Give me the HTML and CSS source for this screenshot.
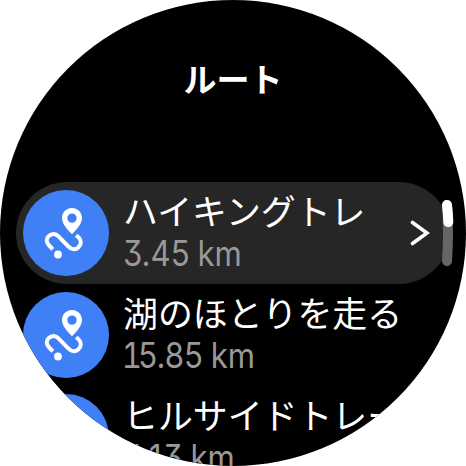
FILE: index.html
```
<!DOCTYPE html>
<html lang="ja">
<head>
<meta charset="utf-8">
<title>ルート</title>
<link rel="stylesheet" href="styles.css">
</head>
<body>
<svg class="defs" width="0" height="0" aria-hidden="true">
  <symbol id="route" viewBox="0 0 86 86">
    <path fill="#fff" fill-rule="evenodd" d="M49 18c-5.500 0-10 4.300-10 9.700 0 5.800 4.800 11.300 10 16.600 5.200-5.300 10-10.800 10-16.600 0-5.400-4.500-9.700-10-9.700zm0 5.400a4.700 4.700 0 1 1 0 9.400a4.700 4.700 0 1 1 0-9.400z"/>
    <path fill="none" stroke="#fff" stroke-width="4" d="M29.800 59.300L26.200 55.500C23 52.200 23 48.500 25.800 46C28.500 43.400 32.500 43.300 35.500 46.300L44.700 55.900C48.200 59.600 52.200 60.200 55.200 57.500C58.500 54.500 58.600 50.500 56 47.900L53.300 45.200"/>
    <circle cx="35" cy="64.500" r="3.900" fill="#fff"/>
  </symbol>
</svg>
<main class="watch">
  <h1 class="title">ルート</h1>
  <ul class="routes">
    <li class="route selected">
      <svg class="badge"><use href="#route"/></svg>
      <div class="info"><span class="name">ハイキングトレ</span><span class="distance">3.45 km</span></div>
      <svg class="chevron" viewBox="0 0 20 28"><path d="M2.500 3.500L17 14L2.500 24.500"/></svg>
    </li>
    <li class="route">
      <svg class="badge"><use href="#route"/></svg>
      <div class="info"><span class="name">湖のほとりを走る</span><span class="distance"><span class="one">1</span>5.85 km</span></div>
    </li>
    <li class="route">
      <svg class="badge"><use href="#route"/></svg>
      <div class="info"><span class="name">ヒルサイドトレー</span><span class="distance">4.<span class="one decimal">1</span>3 km</span></div>
    </li>
  </ul>
  <svg class="scrollbar" viewBox="0 0 14 68"><path class="track" d="M7 6Q9 34 7 62"/><path class="thumb" d="M7 6Q8 14 8.300 23"/></svg>
</main>
</body>
</html>
```
FILE: styles.css
```
body {
  margin: 0;
  background: #fff;
}
.defs {
  position: absolute;
}
.watch {
  position: relative;
  width: 466px;
  height: 466px;
  overflow: hidden;
  background: #000;
  clip-path: circle(233px);
  color: #fff;
  font-family: "Noto Sans CJK JP", sans-serif;
}
.title {
  margin: 0;
  padding-top: 54px;
  height: 182px;
  box-sizing: border-box;
  text-align: center;
  font-size: 33px;
  line-height: 48px;
  font-weight: 700;
}
.routes {
  list-style: none;
  margin: 0 16px;
  padding: 0;
}
.route {
  display: flex;
  align-items: center;
  height: 102px;
  padding: 0 20px 0 7px;
  box-sizing: border-box;
  border-radius: 51px;
}
.selected {
  background: #262626;
}
.badge {
  flex: none;
  width: 86px;
  height: 86px;
  border-radius: 50%;
  background: #4080f7;
}
.info {
  display: flex;
  flex: 1;
  flex-direction: column;
  align-items: flex-start;
  min-width: 0;
  margin-left: 14px;
  white-space: nowrap;
}
.name {
  font-size: 34.900px;
  line-height: 36px;
  padding-bottom: 6px;
  font-weight: 400;
}
.distance {
  color: #999;
  font-family: Inter, sans-serif;
  font-size: 35px;
  line-height: 39px;
  margin-bottom: 1px;
  font-feature-settings: "cv09";
  word-spacing: -1px;
  transform: scaleX(.89);
  transform-origin: left;
}
.one {
  margin-left: -1.500px;
  letter-spacing: -4px;
  font-feature-settings: "tnum";
}
.decimal {
  margin-left: -5px;
}
.chevron {
  flex: none;
  width: 20px;
  height: 28px;
}
.chevron path {
  fill: none;
  stroke: #fff;
  stroke-width: 3.600;
  stroke-linecap: round;
}
.scrollbar {
  position: absolute;
  left: 440px;
  top: 199px;
  width: 14px;
  height: 68px;
}
.scrollbar path {
  fill: none;
  stroke-width: 10;
  stroke-linecap: round;
}
.scrollbar .track {
  stroke: #666;
}
.scrollbar .thumb {
  stroke: #fff;
}
```
